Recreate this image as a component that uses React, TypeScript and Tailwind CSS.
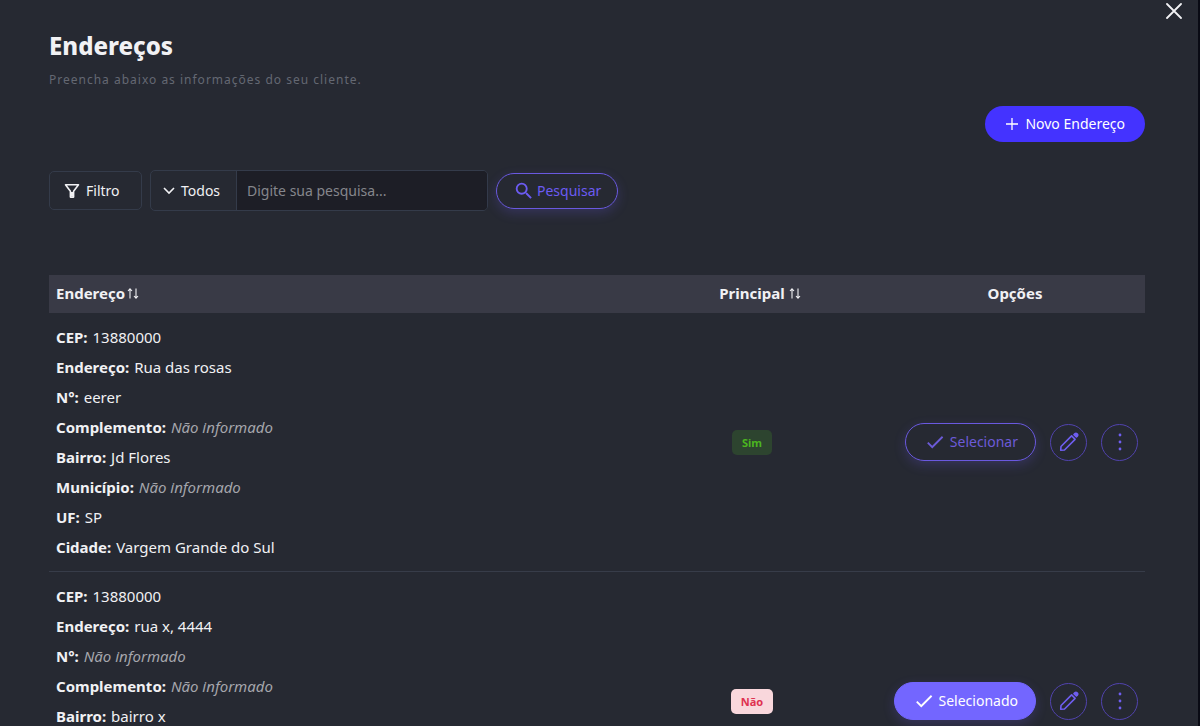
import React, { useState } from 'react';
import { MdCheck, MdSearch } from 'react-icons/md';

type Address = {
  id: number;
  selected: boolean;
  main: boolean;
  fields: { label: string; value?: string }[];
};

const addresses: Address[] = [
  {
    id: 1,
    selected: false,
    main: true,
    fields: [
      { label: 'CEP', value: '13880000' },
      { label: 'Endereço', value: 'Rua das rosas' },
      { label: 'N°', value: 'eerer' },
      { label: 'Complemento' },
      { label: 'Bairro', value: 'Jd Flores' },
      { label: 'Município' },
      { label: 'UF', value: 'SP' },
      { label: 'Cidade', value: 'Vargem Grande do Sul' },
    ],
  },
  {
    id: 2,
    selected: true,
    main: false,
    fields: [
      { label: 'CEP', value: '13880000' },
      { label: 'Endereço', value: 'rua x, 4444' },
      { label: 'N°' },
      { label: 'Complemento' },
      { label: 'Bairro', value: 'bairro x' },
      { label: 'Município' },
      { label: 'UF', value: 'SP' },
      { label: 'Cidade', value: 'Vargem Grande do Sul' },
    ],
  },
];

const FilterIcon = () => (
  <svg width="16" height="16" viewBox="0 0 16 16" fill="none" stroke="currentColor" strokeWidth="1.6" strokeLinejoin="round">
    <path d="M1.5 1.8h13L9.6 8.2v5.9H6.4V8.2z" />
    <path d="M8 9v4.5" strokeWidth="2" />
  </svg>
);

const SortIcon = () => (
  <svg width="12" height="14" viewBox="0 0 12 14" fill="none" stroke="currentColor" strokeWidth="1.1">
    <path d="M3 12.5V3M1 5l2-2.2L5 5M9 2.5V12M7 10l2 2.2 2-2.2" />
  </svg>
);

const PencilIcon = () => (
  <svg width="20" height="20" viewBox="0 0 20 20" fill="none" stroke="currentColor" strokeWidth="1.6" strokeLinejoin="round">
    <path d="M1.7 18.3l.3-3.8L12.6 3.9l3.5 3.5L5.5 18z" />
    <path d="M15 2.6l.9-.9a1.5 1.5 0 0 1 2 0l.4.4a1.5 1.5 0 0 1 0 2l-.9.9z" fill="currentColor" />
  </svg>
);

const DotsIcon = () => (
  <svg width="4" height="18" viewBox="0 0 4 18" fill="currentColor">
    <circle cx="2" cy="2" r="1.4" />
    <circle cx="2" cy="9" r="1.4" />
    <circle cx="2" cy="16" r="1.4" />
  </svg>
);

const roundButton =
  'flex size-[37px] shrink-0 items-center justify-center rounded-full border border-[#5143ae] text-[#6f5ef0]';

const App = () => {
  const [search, setSearch] = useState('');

  return (
    <main className="relative h-screen overflow-y-auto border-r-2 border-[#090a14] bg-[#262932] pr-[53px] pl-[49px] font-['Noto_Sans','Open_Sans',sans-serif] text-[15px] text-[#f1f1f4] [scrollbar-width:none]">
      <button type="button" aria-label="Fechar" className="absolute top-[3px] right-4">
        <svg width="16" height="16" viewBox="0 0 16 16" fill="none" stroke="currentColor" strokeWidth="1.8" strokeLinecap="round">
          <path d="M1 1l14 14M15 1L1 15" />
        </svg>
      </button>

      <header className="pt-7">
        <h1 className="text-2xl leading-9 font-extrabold">Endereços</h1>
        <p className="mt-1.5 text-xs leading-5 tracking-[1px] text-[#646872]">
          Preencha abaixo as informações do seu cliente.
        </p>
      </header>

      <div className="mt-4 flex justify-end">
        <button type="button" className="flex h-9 items-center gap-1.5 rounded-full bg-[#4433ff] px-5 text-sm text-white">
          <svg width="14" height="14" viewBox="0 0 14 14" fill="none" stroke="currentColor" strokeWidth="1.3">
            <path d="M7 1v12M1 7h12" />
          </svg>
          Novo Endereço
        </button>
      </div>

      <form className="mt-7 flex items-center gap-2 text-sm" onSubmit={(e) => e.preventDefault()}>
        <button type="button" className="flex h-[39px] w-[93px] items-center gap-1.5 rounded-[5px] border border-[#343b4a] pl-3.5">
          <FilterIcon />
          Filtro
        </button>
        <div className="flex h-[41px] w-[338px] overflow-hidden rounded-[5px] border border-[#343b4a]">
          <button type="button" className="flex w-[86px] shrink-0 items-center gap-1.5 border-r border-[#343b4a] pl-3">
            <svg width="12" height="12" viewBox="0 0 12 12" fill="none" stroke="currentColor" strokeWidth="1.6">
              <path d="M1 3l5 5 5-5" />
            </svg>
            Todos
          </button>
          <input
            type="text"
            aria-label="Pesquisa"
            placeholder="Digite sua pesquisa..."
            value={search}
            onChange={(e) => setSearch(e.target.value)}
            className="min-w-0 flex-1 bg-[#1d1e26] px-2.5 outline-none placeholder:text-[#85868c]"
          />
        </div>
        <button
          type="submit"
          className="flex h-9 items-center gap-0.5 rounded-full border border-[#6a59e0] px-4 text-[#6c5bf2] shadow-[0_4px_12px_#6c5bf238]"
        >
          <MdSearch size={22} />
          Pesquisar
        </button>
      </form>

      <table className="mt-16 w-full border-collapse">
        <thead>
          <tr className="bg-[#393a46]">
            <th className="px-[7px] pt-[7px] pb-[9px] text-left leading-[22px] font-bold">
              <span className="flex items-center gap-0.5">
                Endereço
                <SortIcon />
              </span>
            </th>
            <th className="w-[250px] pt-[7px] pb-[9px] leading-[22px] font-bold">
              <span className="flex items-center justify-center gap-1">
                Principal
                <SortIcon />
              </span>
            </th>
            <th className="w-[260px] pt-[7px] pb-[9px] leading-[22px] font-bold">Opções</th>
          </tr>
        </thead>
        <tbody>
          {addresses.map((address) => (
            <tr key={address.id} className="border-b border-[#373c49]">
              <td className="px-[7px] py-[9px] leading-[30px]">
                {address.fields.map((field) => (
                  <p key={field.label}>
                    <strong className="mr-px font-bold">{field.label}:</strong>{' '}
                    {field.value ? (
                      <span>{field.value}</span>
                    ) : (
                      <em className="text-[#a5a6ac]">Não informado</em>
                    )}
                  </p>
                ))}
              </td>
              <td className="pr-4 text-center">
                <span
                  className={`inline-block rounded-[5px] px-2.5 text-[11px] leading-[25px] font-bold ${
                    address.main ? 'bg-[#2d442f] text-[#4bb51f]' : 'bg-[#f9d7dc] text-[#df3150]'
                  }`}
                >
                  {address.main ? 'Sim' : 'Não'}
                </span>
              </td>
              <td className="px-[7px]">
                <div className="flex items-center justify-end gap-3.5">
                  <button
                    type="button"
                    className={`flex h-[38px] items-center gap-1 rounded-full border pr-[17px] pl-[18px] text-sm shadow-[0_4px_12px_#6c5bf238] ${
                      address.selected
                        ? 'border-[#7366ff] bg-[#7366ff] text-white'
                        : 'border-[#6a59e0] text-[#6c5bd8]'
                    }`}
                  >
                    <MdCheck size={22} />
                    {address.selected ? 'Selecionado' : 'Selecionar'}
                  </button>
                  <button type="button" aria-label="Editar" className={roundButton}>
                    <PencilIcon />
                  </button>
                  <button type="button" aria-label="Mais opções" className={roundButton}>
                    <DotsIcon />
                  </button>
                </div>
              </td>
            </tr>
          ))}
        </tbody>
      </table>
    </main>
  );
};

export default App;
